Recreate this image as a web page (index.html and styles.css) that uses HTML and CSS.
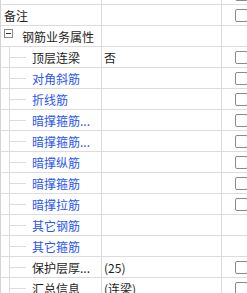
FILE: index.html
```html
<!DOCTYPE html>
<html lang="zh-CN">
<head>
    <meta charset="UTF-8">
    <title>属性列表</title>
    <link rel="stylesheet" href="styles.css">
</head>
<body>
    <div class="prop-grid">
        <div class="row">
            <div class="name"></div>
            <div class="val"></div>
            <div class="chk"><span class="box"></span></div>
        </div>
        <div class="row">
            <div class="name">备注</div>
            <div class="val"></div>
            <div class="chk"><span class="box"></span></div>
        </div>
        <div class="row group">
            <div class="name"><span class="toggle"></span>钢筋业务属性</div>
            <div class="val"></div>
            <div class="chk"></div>
        </div>
        <div class="row child">
            <div class="name">顶层连梁</div>
            <div class="val">否</div>
            <div class="chk"><span class="box"></span></div>
        </div>
        <div class="row child link">
            <div class="name">对角斜筋</div>
            <div class="val"></div>
            <div class="chk"><span class="box"></span></div>
        </div>
        <div class="row child link">
            <div class="name">折线筋</div>
            <div class="val"></div>
            <div class="chk"><span class="box"></span></div>
        </div>
        <div class="row child link">
            <div class="name">暗撑箍筋...</div>
            <div class="val"></div>
            <div class="chk"><span class="box"></span></div>
        </div>
        <div class="row child link">
            <div class="name">暗撑箍筋...</div>
            <div class="val"></div>
            <div class="chk"><span class="box"></span></div>
        </div>
        <div class="row child link">
            <div class="name">暗撑纵筋</div>
            <div class="val"></div>
            <div class="chk"><span class="box"></span></div>
        </div>
        <div class="row child link">
            <div class="name">暗撑箍筋</div>
            <div class="val"></div>
            <div class="chk"><span class="box"></span></div>
        </div>
        <div class="row child link">
            <div class="name">暗撑拉筋</div>
            <div class="val"></div>
            <div class="chk"><span class="box"></span></div>
        </div>
        <div class="row child link">
            <div class="name">其它钢筋</div>
            <div class="val"></div>
            <div class="chk"></div>
        </div>
        <div class="row child link">
            <div class="name">其它箍筋</div>
            <div class="val"></div>
            <div class="chk"></div>
        </div>
        <div class="row child">
            <div class="name">保护层厚...</div>
            <div class="val">(25)</div>
            <div class="chk"><span class="box"></span></div>
        </div>
        <div class="row child">
            <div class="name">汇总信息</div>
            <div class="val">(连梁)</div>
            <div class="chk"><span class="box"></span></div>
        </div>
    </div>
</body>
</html>
```

FILE: styles.css
```css
* {
    margin: 0;
    padding: 0;
    box-sizing: border-box;
}

body {
    background: #fff;
    overflow: hidden;
    font-family: 'Noto Sans CJK SC', 'Liberation Sans', sans-serif;
    font-size: 12px;
    color: #1e1e1e;
}

.prop-grid {
    margin-top: -16px;
    width: 100%;
    border-left: 1px solid #d4d4d4;
}

.row {
    display: grid;
    grid-template-columns: 101px 120px 1fr;
    height: 21px;
    border-bottom: 1px solid #dcdcdc;
}

.name,
.val,
.chk {
    display: flex;
    align-items: center;
    white-space: nowrap;
    overflow: hidden;
}

.name {
    position: relative;
    padding-left: 3px;
    border-right: 1px solid #dcdcdc;
}

.val {
    padding-left: 2px;
    border-right: 1px solid #dcdcdc;
}

.chk {
    padding-left: 13px;
}

.box {
    flex-shrink: 0;
    width: 13px;
    height: 13px;
    border: 1px solid #8a8a8a;
    border-radius: 2px;
    background: #fff;
}

/* 分组行 */
.toggle {
    position: relative;
    flex-shrink: 0;
    width: 9px;
    height: 9px;
    margin-right: 9px;
    border: 1px solid #8c8c8c;
    background: #fff;
    align-self: flex-start;
    margin-top: 3px;
}

.toggle::after {
    content: '';
    position: absolute;
    left: 1px;
    right: 1px;
    top: 3px;
    height: 1px;
    background: #333;
}

/* 子项树线 */
.child .name {
    padding-left: 31px;
}

.child .name::before {
    content: '';
    position: absolute;
    left: 8px;
    top: 0;
    bottom: 0;
    width: 1px;
    background: #dcdcdc;
}

.child .name::after {
    content: '';
    position: absolute;
    left: 9px;
    width: 16px;
    top: 10px;
    height: 1px;
    background: #dcdcdc;
}

.link .name {
    color: #2a55f2;
}
```
